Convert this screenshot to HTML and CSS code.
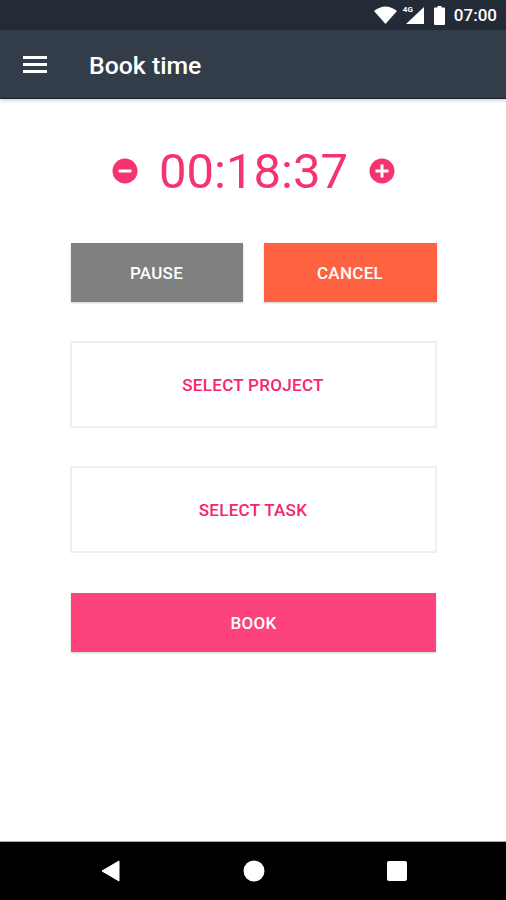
FILE: index.html
```html
<!DOCTYPE html>
<html lang="en">
<head>
<meta charset="utf-8">
<title>Book time</title>
<link rel="stylesheet" href="styles.css">
</head>
<body>
<div class="screen">
  <div class="status">
    <svg class="ic-wifi" width="23" height="18" viewBox="0 0 23 18"><path d="M0 5 Q11.500 -4 23 5 L11.500 18 Z" fill="#fff"/></svg>
    <span class="signal">
      <svg width="18" height="17" viewBox="0 0 18 17"><path d="M18 0 V17 H0 Z" fill="#fff"/></svg>
      <span class="lte">4G</span>
    </span>
    <svg class="ic-batt" width="11" height="19" viewBox="0 0 11 19"><path d="M3.500 0 H7.500 V1.500 H10 Q11 1.500 11 2.500 V18 Q11 19 10 19 H1 Q0 19 0 18 V2.500 Q0 1.500 1 1.500 H3.500 Z" fill="#fff"/></svg>
    <span class="clock">07:00</span>
  </div>
  <header class="appbar">
    <svg class="ic-menu" width="24" height="19" viewBox="0 0 24 19"><path d="M0 1 H24 V4 H0 Z M0 8 H24 V11 H0 Z M0 15 H24 V18 H0 Z" fill="#fff"/></svg>
    <h1 class="title">Book time</h1>
  </header>
  <main class="content">
    <div class="timer">
      <svg class="ic-minus" width="26" height="26" viewBox="0 0 26 26"><circle cx="13" cy="13" r="12.500" fill="#f5336e"/><rect x="6.500" y="11.500" width="13" height="3" fill="#fff" rx="1"/></svg>
      <span class="time">00:18:37</span>
      <svg class="ic-plus" width="26" height="26" viewBox="0 0 26 26"><circle cx="13" cy="13" r="12.500" fill="#f5336e"/><path d="M11.500 6.500 H14.500 V11.500 H19.500 V14.500 H14.500 V19.500 H11.500 V14.500 H6.500 V11.500 H11.500 Z" fill="#fff"/></svg>
    </div>
    <div class="pair">
      <button class="btn grey">PAUSE</button>
      <button class="btn orange">CANCEL</button>
    </div>
    <button class="select">SELECT PROJECT</button>
    <button class="select">SELECT TASK</button>
    <button class="btn pink">BOOK</button>
  </main>
  <nav class="navbar">
    <svg width="20" height="22" viewBox="0 0 20 22"><path d="M18 1 V21 L1 11 Z" fill="#fff" stroke="#fff" stroke-linejoin="round"/></svg>
    <svg width="22" height="22" viewBox="0 0 22 22"><circle cx="11" cy="11" r="10.500" fill="#fff"/></svg>
    <svg width="20" height="20" viewBox="0 0 20 20"><rect width="20" height="20" rx="2" fill="#fff"/></svg>
  </nav>
</div>
</body>
</html>
```
FILE: styles.css
```css
* { box-sizing: border-box; }
html, body { margin: 0; padding: 0; }
body { font-family: Roboto, "Liberation Sans", sans-serif; background: #fff; }
.screen { width: 506px; height: 900px; display: flex; flex-direction: column; overflow: hidden; }

.status { height: 30px; flex: none; background: #232b37; display: flex; align-items: center; justify-content: flex-end; padding-right: 9px; color: #fff; }
.ic-wifi { margin-right: 9px; }
.signal { position: relative; width: 18px; height: 17px; margin-right: 10px; }
.signal svg { display: block; }
.lte { position: absolute; left: -3px; top: -2px; font-size: 8px; font-weight: 700; line-height: 9px; color: #fff; text-shadow: 0 0 1px #232b37; }
.ic-batt { margin-right: 9px; }
.clock { font-size: 17px; font-weight: 500; line-height: 20px; }

.appbar { height: 69px; flex: none; background: #333d4a; display: flex; align-items: center; padding-left: 23px; border-bottom: 1px solid #1a2028; box-shadow: 0 2px 3px rgba(60,70,100,.2); position: relative; }
.ic-menu { margin-right: 42px; }
.title { margin: 0; font-size: 24.800px; font-weight: 500; color: #fff; line-height: 32px; position: relative; top: 2px; }

.content { flex: 1; display: flex; flex-direction: column; align-items: center; padding-top: 45px; }
.timer { display: flex; align-items: center; justify-content: center; gap: 23px; height: 56px; margin-bottom: 43px; }
.ic-minus { margin-left: 2px; margin-right: -2px; position: relative; top: -1px; }
.ic-plus { margin-left: -2px; margin-right: 1px; position: relative; top: -1px; }
.time { font-size: 49px; line-height: 56px; font-weight: 400; color: #f5336e; }

.pair { display: flex; gap: 21px; margin-bottom: 39px; margin-left: 1px; }
.btn { border: 0; margin: 0; padding: 0; height: 59px; color: #fff; font: 500 17px Roboto, sans-serif; letter-spacing: .3px; box-shadow: 0 1px 2px rgba(0,0,0,.2); }
.pair .btn { width: 172px; }
.pair .orange { width: 173px; }
.grey { background: #808080; }
.orange { background: #ff6240; }
.pink { width: 365px; background: #fd437b; margin-top: 40px; margin-left: 1px; }
.select { width: 367px; height: 87px; background: #fff; border: 2px solid #efefef; color: #f5266a; font: 500 17px Roboto, sans-serif; letter-spacing: .3px; padding: 0; }
.select + .select { margin-top: 38px; }

.navbar { height: 59px; flex: none; background: #000; border-top: 1px solid #aaa; display: flex; align-items: center; padding: 0 99px 0 101px; justify-content: space-between; }
```
